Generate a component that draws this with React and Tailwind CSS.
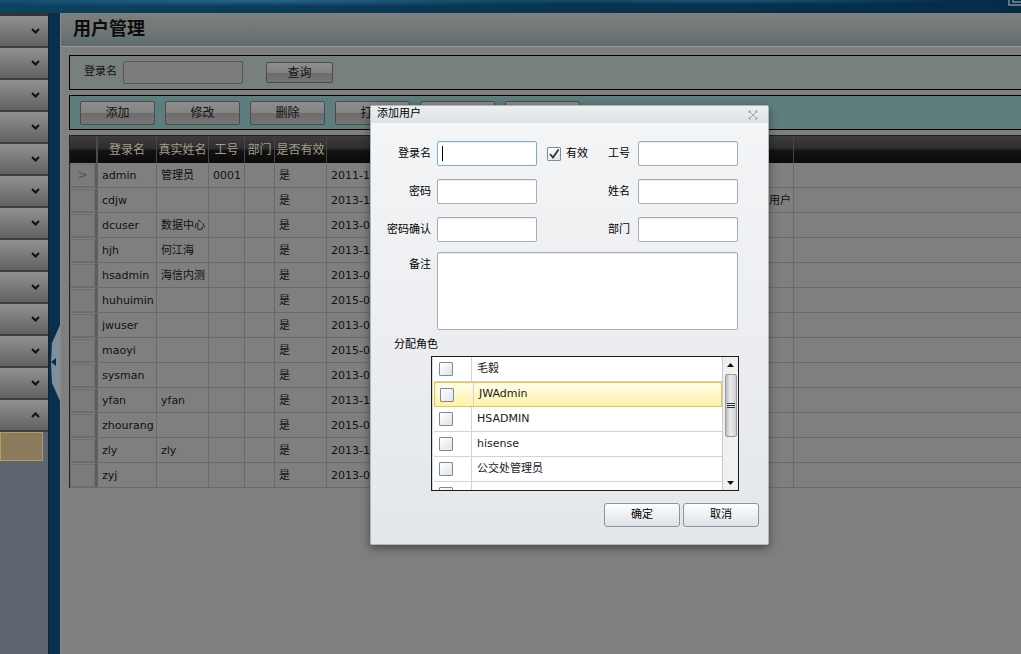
import React from 'react';

const rows = [
  ['admin', '管理员', '0001', '', '是', '2011-11-18 10:20', ''],
  ['cdjw', '', '', '', '是', '2013-11-05 09:12', '成都交委用户'],
  ['dcuser', '数据中心', '', '', '是', '2013-05-21 14:30', ''],
  ['hjh', '何江海', '', '', '是', '2013-10-08 16:45', ''],
  ['hsadmin', '海信内测', '', '', '是', '2013-06-17 11:02', ''],
  ['huhuimin', '', '', '', '是', '2015-03-12 08:55', ''],
  ['jwuser', '', '', '', '是', '2013-07-02 10:10', ''],
  ['maoyi', '', '', '', '是', '2015-04-09 13:20', ''],
  ['sysman', '', '', '', '是', '2013-05-06 09:00', ''],
  ['yfan', 'yfan', '', '', '是', '2013-12-11 15:40', ''],
  ['zhourang', '', '', '', '是', '2015-02-26 17:05', ''],
  ['zly', 'zly', '', '', '是', '2013-11-19 10:33', ''],
  ['zyj', '', '', '', '是', '2013-08-14 12:00', ''],
];

const roles = ['毛毅', 'JWAdmin', 'HSADMIN', 'hisense', '公交处管理员', ''];

function Chevron({ up }) {
  return (
    <svg width="9" height="6" viewBox="0 0 9 6">
      <polyline
        points={up ? '1,5 4.5,1.5 8,5' : '1,1 4.5,4.5 8,1'}
        fill="none"
        stroke="#111"
        strokeWidth="2"
      />
    </svg>
  );
}

function Sidebar() {
  const heads = Array.from({ length: 13 });
  return (
    <div className="w-[49px] shrink-0 flex flex-col bg-[#5c6570] border-r border-[#1e1e1e]">
      <div className="h-[3px] bg-[#333]" />
      {heads.map((_, i) => (
        <div
          key={i}
          className="h-[32px] shrink-0 flex items-center justify-end pr-[8px] border-b-2 border-[#3d3d3d] bg-[linear-gradient(#909090,#7a7a7a_50%,#616161)]"
        >
          <Chevron up={i === 12} />
        </div>
      ))}
      <div className="h-[29px] w-[43px] shrink-0 bg-[#8b7a5c] border border-[#b69d55]" />
    </div>
  );
}

function Splitter() {
  return (
    <div className="relative w-[11px] shrink-0 bg-[#07304f]">
      <svg className="absolute left-0 top-[310px]" width="11" height="80" viewBox="0 0 11 80">
        <path d="M11 2 L3 20 L2 40 L3 60 L11 78 Z" fill="#7d909c" />
        <polygon points="2,39 7,35 7,43" fill="#0b2d47" />
      </svg>
    </div>
  );
}

function GrayButton({ children, w = 'w-[75px]', h = 'h-[24px]' }) {
  return (
    <div
      className={`${w} ${h} shrink-0 flex items-center justify-center rounded-[2px] border border-[#4b4b4b] bg-[linear-gradient(#8e8e8e,#838383_50%,#6c6c6c_52%,#757575)] text-[12px] text-[#111]`}
    >
      {children}
    </div>
  );
}

const colW = ['w-[59px]', 'w-[52px]', 'w-[36px]', 'w-[30px]', 'w-[52px]', 'w-[230px]', 'w-[237px]'];
const heads = ['登录名', '真实姓名', '工号', '部门', '是否有效', '创建时间', '备注'];

function Grid() {
  return (
    <div className="mt-[5px] border-t border-l border-[#222] flex flex-col">
      <div className="h-[27px] flex bg-[linear-gradient(#3d3d3d,#2e2e2e_45%,#121212_55%,#0b0b0b)] text-[12px] text-[#a49d8b]">
        <div className="w-[28px] shrink-0 border-r-2 border-[#4a4a4a]" />
        {heads.map((h, i) => (
          <div key={i} className={`${colW[i]} shrink-0 border-r border-[#474747] flex items-center justify-center`}>
            {h}
          </div>
        ))}
        <div className="flex-1" />
      </div>
      {rows.map((r, ri) => (
        <div key={ri} className="h-[25px] flex border-b border-[#6a6a6a]">
          <div className="w-[28px] shrink-0 border-r-[3px] border-[#5e5e5e] flex items-center justify-center text-[#555]">
            <div className="w-[25px] h-[23px] border border-[#6e6e6e] bg-[#7b7b7b] flex items-center justify-center text-[13px]">
              {ri === 0 ? '>' : ''}
            </div>
          </div>
          {r.map((c, ci) => (
            <div
              key={ci}
              className={`${colW[ci]} shrink-0 border-r border-[#6a6a6a] flex items-center pl-[4px] pt-[2px] whitespace-nowrap overflow-hidden ${ci === 6 ? 'justify-end pr-[2px]' : ''}`}
            >
              {c}
            </div>
          ))}
          <div className="flex-1" />
        </div>
      ))}
    </div>
  );
}

function Main() {
  return (
    <div className="flex-1 flex flex-col border-l border-[#8b8b8b] min-w-0">
      <div className="h-[34px] shrink-0 flex items-center pl-[12px] pb-[2px] border-b border-[#9a9a9a] bg-[linear-gradient(#7f7f7f,#6e7676_60%,#5d6c6d)] text-[18px] font-bold text-[#0c0c0c]">
        用户管理
      </div>
      <div className="pl-[8px] pt-[8px] flex flex-col">
        <div className="h-[35px] flex items-center pl-[14px] border-y border-l border-black bg-[#77807d]">
          <span>登录名</span>
          <div className="ml-[6px] w-[120px] h-[23px] rounded-[2px] border border-[#575757] bg-[#7c7c7c]" />
          <div className="ml-[23px]">
            <GrayButton w="w-[67px]" h="h-[21px]">查询</GrayButton>
          </div>
        </div>
        <div className="mt-[5px] h-[35px] flex items-center gap-[10px] pl-[10px] border-y border-l border-black bg-[#5e7e7d]">
          <GrayButton>添加</GrayButton>
          <GrayButton>修改</GrayButton>
          <GrayButton>删除</GrayButton>
          <GrayButton>打印</GrayButton>
          <GrayButton>导出</GrayButton>
          <GrayButton>刷新</GrayButton>
        </div>
        <Grid />
      </div>
    </div>
  );
}

function Field({ focused }) {
  return (
    <div
      className={`w-[100px] h-[25px] shrink-0 bg-white rounded-[2px] border ${focused ? 'border-[#78b0cc]' : 'border-[#a3adb6]'} shadow-[inset_0_1px_1px_rgba(0,0,0,0.08)] flex items-center pl-[4px]`}
    >
      {focused && <div className="w-px h-[15px] bg-black" />}
    </div>
  );
}

function Box({ checked }) {
  return (
    <div className="w-[14px] h-[14px] shrink-0 border border-[#7d8b98] rounded-[1px] bg-[linear-gradient(135deg,#ffffff,#dde4ea)] flex items-center justify-center">
      {checked && (
        <svg width="12" height="12" viewBox="0 0 12 12">
          <path d="M2 6 L5 9.5 L10.5 1.5" fill="none" stroke="#333" strokeWidth="1.8" />
        </svg>
      )}
    </div>
  );
}

function DialogButton({ children }) {
  return (
    <div className="w-[76px] h-[24px] flex items-center justify-center rounded-[3px] border border-[#8a949e] bg-[linear-gradient(#fdfdfd,#eef0f2_50%,#dde1e5)]">
      {children}
    </div>
  );
}

function Dialog() {
  return (
    <div className="absolute left-[370px] top-[105px] w-[399px] h-[440px] flex flex-col border border-[#a9b7c1] rounded-[2px] bg-[linear-gradient(#f4f5f7,#e4e7ea)] shadow-[0_3px_10px_rgba(0,0,0,0.45)] text-[11px] text-black">
      <div className="h-[17px] shrink-0 flex items-center justify-between pl-[6px] pr-[10px] bg-[linear-gradient(#eceef0,#dfe2e5)]">
        <span>添加用户</span>
        <svg width="10" height="10" viewBox="0 0 10 10">
          <path d="M1 1 L9 9 M9 1 L1 9 M1 3 V1 H3 M7 1 H9 V3 M1 7 V9 H3 M7 9 H9 V7" fill="none" stroke="#a0a6ab" strokeWidth="1" />
        </svg>
      </div>
      <div className="flex flex-col pt-[18px]">
        <div className="flex items-center h-[25px]">
          <div className="w-[60px] text-right leading-none">登录名</div>
          <div className="ml-[6px]"><Field focused /></div>
          <div className="w-[93px] flex items-center pl-[10px] leading-none">
            <Box checked />
            <span className="ml-[5px]">有效</span>
            <span className="ml-auto">工号</span>
          </div>
          <div className="ml-[8px]"><Field /></div>
        </div>
        <div className="flex items-center h-[25px] mt-[13px]">
          <div className="w-[60px] text-right leading-none">密码</div>
          <div className="ml-[6px]"><Field /></div>
          <div className="w-[93px] flex items-center justify-end leading-none">姓名</div>
          <div className="ml-[8px]"><Field /></div>
        </div>
        <div className="flex items-center h-[25px] mt-[13px]">
          <div className="w-[60px] text-right leading-none">密码确认</div>
          <div className="ml-[6px]"><Field /></div>
          <div className="w-[93px] flex items-center justify-end leading-none">部门</div>
          <div className="ml-[8px]"><Field /></div>
        </div>
        <div className="flex mt-[10px]">
          <div className="w-[60px] text-right pt-[7px] leading-none">备注</div>
          <div className="ml-[6px] w-[301px] h-[78px] bg-white rounded-[2px] border border-[#a3adb6] shadow-[inset_0_1px_1px_rgba(0,0,0,0.08)]" />
        </div>
        <div className="mt-[8px] h-[14px] leading-[14px] pl-[23px]">分配角色</div>
        <div className="mt-[4px] ml-[60px] w-[308px] h-[135px] flex border border-[#1e1e1e] bg-white">
          <div className="flex-1 overflow-hidden flex flex-col pl-[1px] border-l border-[#d8d8d8]">
            {roles.map((r, i) => (
              <div
                key={i}
                className={`h-[25px] shrink-0 flex border-b ${i === 1 ? 'border border-[#f2c241] bg-[linear-gradient(#fffdec,#fdf2a8)]' : 'border-[#d3d3d3]'}`}
              >
                <div className={`w-[38px] shrink-0 flex items-center pl-[5px] ${i === 1 ? '' : 'border-r border-[#d3d3d3]'}`}>
                  <Box />
                </div>
                {i === 1 && <div className="w-px bg-[#d3d3d3]" />}
                <div className="flex items-center pl-[5px] text-[#1a1a1a]">{r}</div>
              </div>
            ))}
          </div>
          <div className="w-[16px] shrink-0 flex flex-col items-center bg-[#f0f0f0] border-l border-[#c9c9c9]">
            <svg className="mt-[6px]" width="7" height="4" viewBox="0 0 7 4"><polygon points="0,4 3.5,0 7,4" fill="#111" /></svg>
            <div className="mt-[7px] w-[12px] h-[63px] rounded-[2px] border border-[#9a9a9a] bg-[linear-gradient(90deg,#bdbdbd,#ececec_45%,#d0d0d0)] flex flex-col items-center justify-center gap-[1px]">
              <div className="w-[8px] h-px bg-[#333]" />
              <div className="w-[8px] h-px bg-[#333]" />
              <div className="w-[8px] h-px bg-[#333]" />
            </div>
            <svg className="mt-auto mb-[5px]" width="7" height="4" viewBox="0 0 7 4"><polygon points="0,0 7,0 3.5,4" fill="#111" /></svg>
          </div>
        </div>
        <div className="mt-[12px] flex justify-end gap-[3px] pr-[9px]">
          <DialogButton>确定</DialogButton>
          <DialogButton>取消</DialogButton>
        </div>
      </div>
    </div>
  );
}

export default function App() {
  return (
    <div className="relative w-[1021px] h-[654px] overflow-hidden bg-[#7f7f7f] text-[11px] text-[#111] font-['DejaVu_Sans','Noto_Sans_CJK_SC',sans-serif]">
      <div className="relative h-[13px] bg-[radial-gradient(ellipse_at_25%_0%,#2a6785_0%,transparent_35%),radial-gradient(ellipse_at_70%_0%,#1d5676_0%,transparent_25%),linear-gradient(90deg,#0c4262,#073654_50%,#042c48)]">
        <svg className="absolute right-0 top-0" width="14" height="7" viewBox="0 0 14 7">
          <path d="M2 0 V5 H14 M6 0 V2 H14" fill="none" stroke="#7f8c96" strokeWidth="1.5" />
        </svg>
      </div>
      <div className="flex h-[641px]">
        <Sidebar />
        <Splitter />
        <Main />
      </div>
      <Dialog />
    </div>
  );
}
